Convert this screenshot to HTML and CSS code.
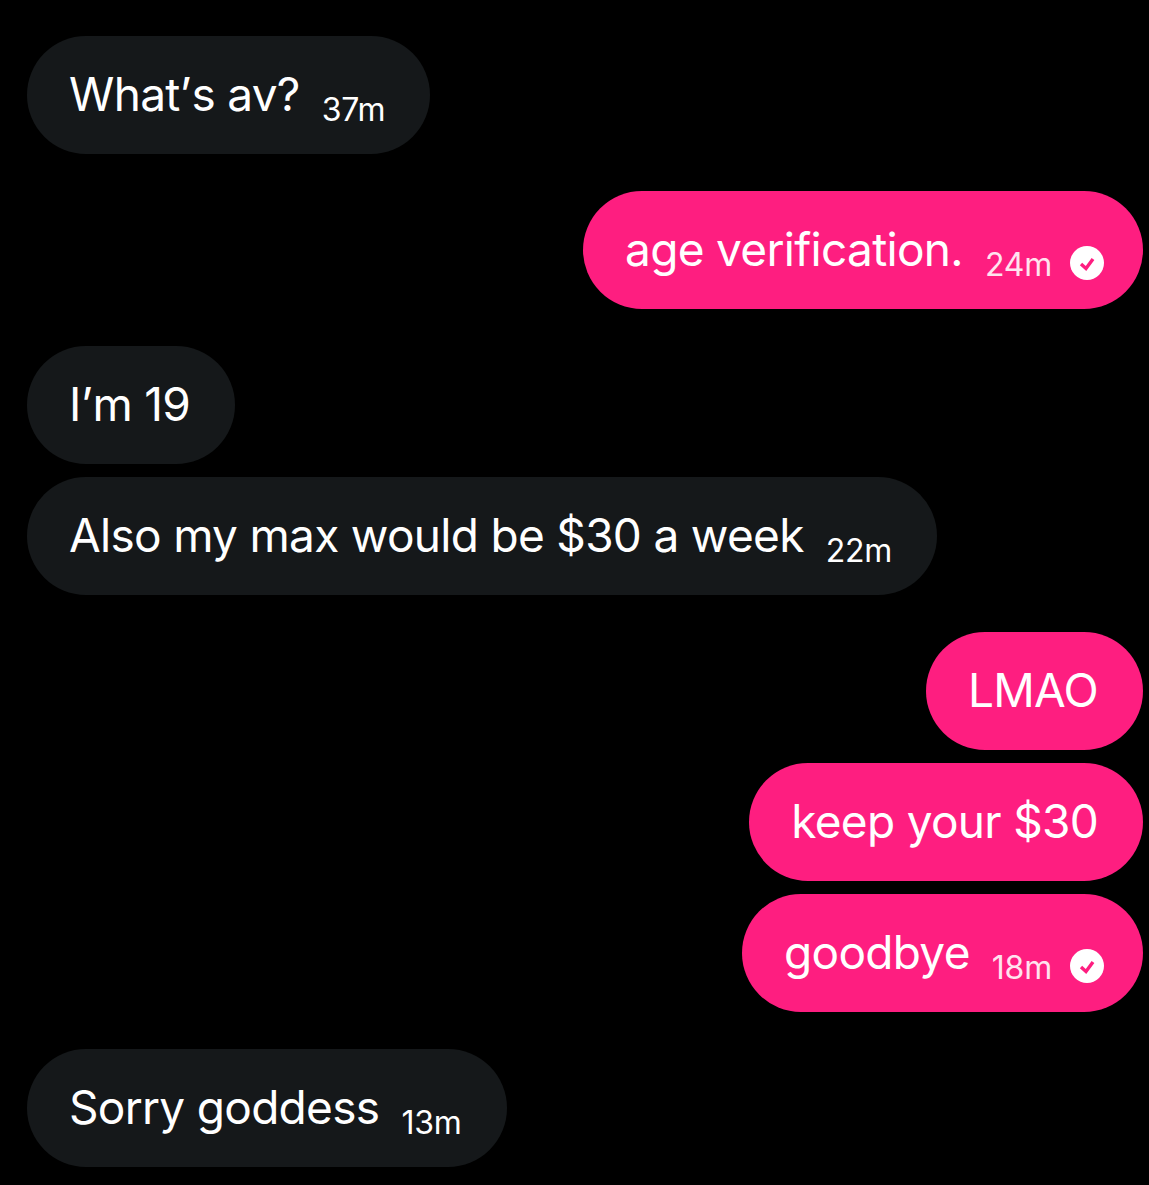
FILE: index.html
```html
<!DOCTYPE html>
<html lang="en">
<head>
    <meta charset="UTF-8">
    <meta name="viewport" content="width=device-width, initial-scale=1.0">
    <title>Messages</title>
    <link rel="stylesheet" href="styles.css">
</head>
<body>

<div id="thread">
    <div class="group them">
        <div class="bubble"><span class="text">What<span class="apos">’</span>s av?</span><span class="time">37m</span></div>
    </div>

    <div class="group me">
        <div class="bubble"><span class="text">age verification.</span><span class="time">24m</span>
            <svg class="seen" viewBox="0 0 34 34"><circle cx="17" cy="17" r="17" fill="#fff"/><path d="M11 18l5 4.5 7-9.5" fill="none" stroke="#fe1e80" stroke-width="3.4"/></svg>
        </div>
    </div>

    <div class="group them">
        <div class="bubble"><span class="text">I<span class="apos">’</span>m 19</span></div>
        <div class="bubble"><span class="text">Also my max would be $30 a week</span><span class="time">22m</span></div>
    </div>

    <div class="group me">
        <div class="bubble"><span class="text">LMAO</span></div>
        <div class="bubble"><span class="text">keep your $30</span></div>
        <div class="bubble"><span class="text">goodbye</span><span class="time">18m</span>
            <svg class="seen" viewBox="0 0 34 34"><circle cx="17" cy="17" r="17" fill="#fff"/><path d="M11 18l5 4.5 7-9.5" fill="none" stroke="#fe1e80" stroke-width="3.4"/></svg>
        </div>
    </div>

    <div class="group them">
        <div class="bubble"><span class="text">Sorry goddess</span><span class="time">13m</span></div>
    </div>
</div>

</body>
</html>
```

FILE: styles.css
```css
html, body {
    margin: 0;
    padding: 0;
    background-color: #000;
}
body {
    font-family: Inter, "Liberation Sans", sans-serif;
    color: #fff;
}
#thread {
    display: flex;
    flex-direction: column;
    gap: 37px;
    padding: 36px 6px 0 27px;
    height: 1185px;
    box-sizing: border-box;
    overflow: hidden;
}
.group {
    display: flex;
    flex-direction: column;
    gap: 13px;
}
.group.them {
    align-items: flex-start;
}
.group.me {
    align-items: flex-end;
}
.bubble {
    display: flex;
    align-items: center;
    height: 118px;
    padding: 0 45px 0 42px;
    border-radius: 59px;
    box-sizing: border-box;
}
.them .bubble {
    background-color: #15181a;
}
.me .bubble {
    background-color: #fe1e80;
}
.text {
    font-size: 46px;
    letter-spacing: -0.7px;
    position: relative;
    top: -1px;
}
/* the curly quote is too narrow in Inter */
.apos {
    margin-right: 0.5px;
}
.time {
    font-size: 32px;
    letter-spacing: -0.2px;
    margin-left: 22px;
    position: relative;
    top: 14px;
}
.me .time {
    color: #ffe3ef;
}
.seen {
    width: 34px;
    height: 34px;
    margin-left: 18px;
    margin-right: -6px;
    position: relative;
    top: 13px;
}
```
